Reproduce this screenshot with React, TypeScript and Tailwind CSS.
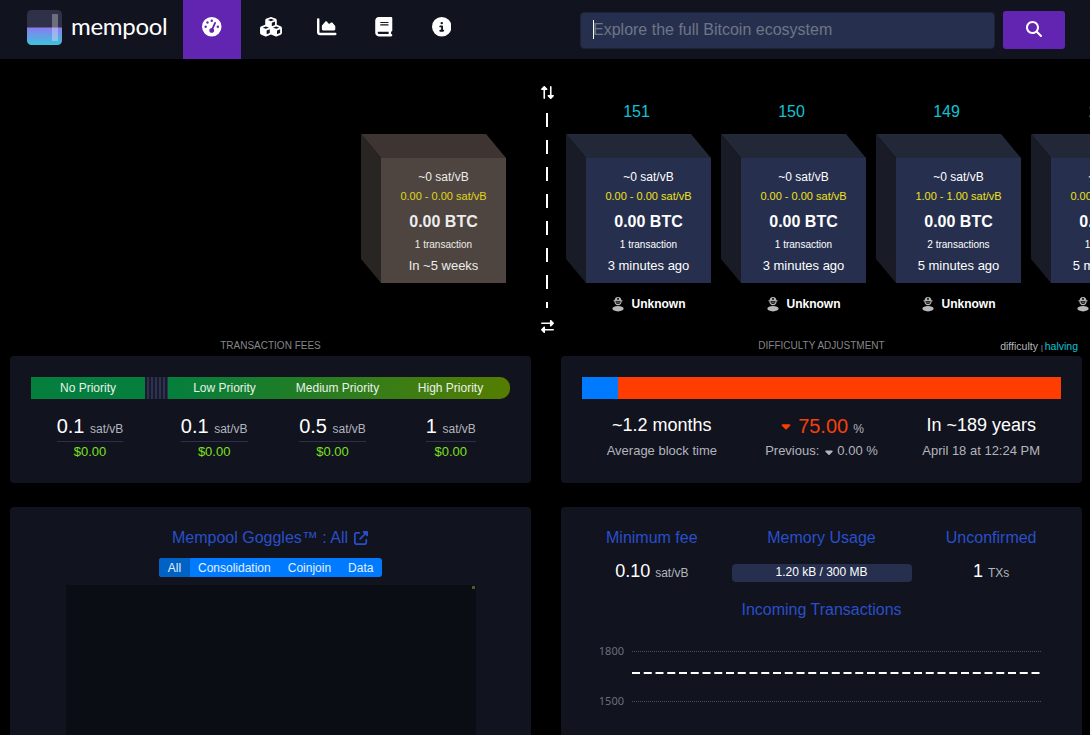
import React from "react";
import {
  FaGaugeHigh,
  FaCubes,
  FaChartArea,
  FaBook,
  FaCircleInfo,
  FaMagnifyingGlass,
  FaRightLeft,
  FaUpRightFromSquare,
  FaCaretDown,
} from "react-icons/fa6";

type Block = {
  height?: string;
  fee: string;
  range: string;
  total: string;
  txs: string;
  time: string;
};

const blocks: Block[] = [
  { height: "151", fee: "~0 sat/vB", range: "0.00 - 0.00 sat/vB", total: "0.00 BTC", txs: "1 transaction", time: "3 minutes ago" },
  { height: "150", fee: "~0 sat/vB", range: "0.00 - 0.00 sat/vB", total: "0.00 BTC", txs: "1 transaction", time: "3 minutes ago" },
  { height: "149", fee: "~0 sat/vB", range: "1.00 - 1.00 sat/vB", total: "0.00 BTC", txs: "2 transactions", time: "5 minutes ago" },
  { height: "148", fee: "~0 sat/vB", range: "0.00 - 0.00 sat/vB", total: "0.00 BTC", txs: "1 transaction", time: "5 minutes ago" },
];

const pending: Block = {
  fee: "~0 sat/vB",
  range: "0.00 - 0.00 sat/vB",
  total: "0.00 BTC",
  txs: "1 transaction",
  time: "In ~5 weeks",
};

const fees = [
  { value: "0.1", cell: "w-[118px] mr-[6px]" },
  { value: "0.1", cell: "flex-1" },
  { value: "0.5", cell: "flex-1" },
  { value: "1", cell: "flex-1" },
];

function Logo() {
  return (
    <svg width="35" height="35" viewBox="0 0 35 35">
      <defs>
        <linearGradient id="logoFill" x1="0" y1="0" x2="0" y2="1">
          <stop offset="0" stopColor="#8c7cf0" />
          <stop offset="1" stopColor="#3cc3dc" />
        </linearGradient>
        <clipPath id="logoClip">
          <rect width="35" height="35" rx="4.5" />
        </clipPath>
      </defs>
      <g clipPath="url(#logoClip)">
        <rect width="35" height="18" fill="#2e3148" />
        <rect y="17.5" width="35" height="17.5" fill="url(#logoFill)" />
        <rect x="25" y="4" width="6" height="27" rx="0.8" fill="#fff" fillOpacity="0.3" />
      </g>
    </svg>
  );
}

function MinerIcon() {
  return (
    <svg width="12" height="16" viewBox="0 0 12 16">
      <path d="M2.6 4.8 A3.4 3.9 0 0 1 9.4 4.8 Z" fill="#b9b9b9" />
      <rect x="1.4" y="4.2" width="9.2" height="1.1" rx="0.5" fill="#b9b9b9" />
      <circle cx="6" cy="2.9" r="1.1" fill="#222" />
      <path d="M2.9 5 C2.9 9.8 9.1 9.8 9.1 5" fill="none" stroke="#b9b9b9" strokeWidth="1.1" />
      <path d="M4.4 6.7 H7.6" stroke="#8a8a8a" strokeWidth="0.8" />
      <ellipse cx="6" cy="12.7" rx="5.6" ry="2.7" fill="#b9b9b9" />
    </svg>
  );
}

function Cube({ block, isPending = false }: { block: Block; isPending?: boolean }) {
  return (
    <div className="grid h-[149px] w-[145px] shrink-0 grid-cols-[20px_125px] grid-rows-[24px_125px]">
      <div
        className={`col-span-2 row-start-1 col-start-1 [clip-path:polygon(0_0,125px_0,145px_24px,20px_24px)] ${
          isPending ? "bg-[#3e3532]" : "bg-[#232838]"
        }`}
      />
      <div
        className={`col-start-1 row-span-2 row-start-1 [clip-path:polygon(0_0,20px_24px,20px_149px,0_125px)] ${
          isPending ? "bg-[#292522]" : "bg-[#191c27]"
        }`}
      />
      <div
        className={`col-start-2 row-start-2 flex flex-col items-center whitespace-nowrap text-white ${
          isPending ? "bg-[#4e4540]" : "bg-[#272f4e]"
        }`}
      >
        <div className={`flex flex-col items-center pt-[11px] ${isPending ? "opacity-90" : ""}`}>
          <div className="text-[12px] leading-[16px]">{block.fee}</div>
          <div className="mt-[3px] text-[11px] leading-4 text-[#eee319]">{block.range}</div>
          <div className="mt-2 text-[16px] font-bold leading-[20px]">{block.total}</div>
          <div className="mt-[5px] text-[10px] leading-4">{block.txs}</div>
          <div className="mt-[5px] text-[13px] leading-4">{block.time}</div>
        </div>
      </div>
    </div>
  );
}

function Header() {
  return (
    <header className="flex h-[59px] shrink-0 items-start bg-[#11131f]">
      <div className="flex w-[183px] items-start pl-[27px] pt-[10px]">
        <Logo />
        <span className="ml-[9px] text-[24px] leading-[32px] tracking-[-0.3px] text-white [font-family:Lato,sans-serif]">
          mempool
        </span>
      </div>
      <nav className="flex h-full text-[19.5px] text-white">
        <a className="flex w-[58px] justify-center bg-[#6225b2] pt-[17px]"><FaGaugeHigh /></a>
        <a className="flex w-[60px] justify-center pr-px pt-[17px]"><FaCubes className="w-[22px]" /></a>
        <a className="flex w-[52px] justify-center pt-[17px]"><FaChartArea /></a>
        <a className="flex w-[61px] justify-center pt-[17px]"><FaBook /></a>
        <a className="flex w-[55px] justify-center pt-[17px]"><FaCircleInfo /></a>
      </nav>
      <div className="ml-auto mr-[25px] flex pt-[11px]">
        <div className="mt-px flex h-[37px] w-[415px] items-center rounded-[4px] border border-[#1d2238] bg-[#272f4e] pb-[2px] pl-[12px] text-[16px] text-[#6d7685]">
          <span className="h-[19px] w-px bg-white" />
          <span className="-ml-px">Explore the full Bitcoin ecosystem</span>
        </div>
        <button className="ml-2 flex h-[38px] w-[62px] items-center justify-center rounded-[3px] bg-[#6225b2] pb-[2px] text-[16px] text-white">
          <FaMagnifyingGlass />
        </button>
      </div>
    </header>
  );
}

function Blockchain() {
  return (
    <section className="flex h-[276px] shrink-0 overflow-hidden">
      <div className="flex w-[506px] shrink-0 justify-end pt-[75px]">
        <Cube block={pending} isPending />
      </div>
      <div className="ml-[31px] flex w-5 shrink-0 flex-col items-center pt-[27px] text-white">
        <FaRightLeft className="h-[13px] w-[13px] rotate-90" />
        <div className="mt-[14px] h-[195px] w-[2px] bg-[repeating-linear-gradient(to_bottom,#fff_0px,#fff_14px,transparent_14px,transparent_27px)]" />
        <FaRightLeft className="mt-[12px] h-[13px] w-[13px]" />
      </div>
      <div className="ml-[9px] flex min-w-0 flex-1 gap-[10px]">
        {blocks.map((b) => (
          <div key={b.height} className="w-[145px] shrink-0 pt-[43px]">
            <div className="w-[141px] text-center text-[16px] leading-5 text-[#10c2d6]">{b.height}</div>
            <div className="pt-[12px]">
              <Cube block={b} />
            </div>
            <div className="flex items-center pl-[46px] pt-[13px]">
              <MinerIcon />
              <span className="ml-[7.5px] text-[12px] font-bold leading-4 text-white">Unknown</span>
            </div>
          </div>
        ))}
      </div>
    </section>
  );
}

function FeesCard() {
  return (
    <div className="h-[127px] rounded-[4px] bg-[#11131f] px-[21px] pt-[21px]">
      <div className="flex h-[22px] text-center text-[12px] leading-[22px] text-[#e8f2ea]">
        <div className="w-[114px] bg-[#047f3d]">No Priority</div>
        <div className="w-[23px] bg-[repeating-linear-gradient(to_right,#181b2b_0px,#181b2b_2px,#2e3150_2px,#2e3150_4px)]" />
        <div className="flex w-[342px] rounded-r-[10px] bg-[linear-gradient(to_right,#047f3d,#1d7d28_33%,#3a7d16_66%,#557d00)]">
          <span className="w-[113px]">Low Priority</span>
          <span className="w-[113px]">Medium Priority</span>
          <span className="w-[113px]">High Priority</span>
        </div>
      </div>
      <div className="flex pt-[15px]">
        {fees.map((f, i) => (
          <div key={i} className={`flex flex-col items-center ${f.cell}`}>
            <div className="flex h-[28px] items-baseline border-b border-[#2d3048] leading-[24px]">
              <span className="text-[20px] text-white">{f.value}</span>
              <span className="ml-[5.5px] text-[12px] text-[#b3b5bd]">sat/vB</span>
            </div>
            <div className="mt-px text-[13px] leading-[18px] text-[#7ce11d]">$0.00</div>
          </div>
        ))}
      </div>
    </div>
  );
}

function DifficultyCard() {
  return (
    <div className="h-[127px] rounded-[4px] bg-[#11131f] px-[21px] pt-[21px]">
      <div className="flex h-[22px] bg-[#ff3d00]">
        <div className="w-[36px] bg-[#007bff]" />
      </div>
      <div className="grid grid-cols-3 pt-[14px] text-center text-[13px] text-[#b3b5bd]">
        <div>
          <div className="h-[28px] text-[18px] leading-[24px] text-white">~1.2 months</div>
          <div className="leading-[20px]">Average block time</div>
        </div>
        <div>
          <div className="flex h-[28px] items-baseline justify-center leading-[26px]">
            <FaCaretDown className="-mt-[2px] ml-[2px] h-[14px] w-[10px] self-center text-[#ff3d00]" />
            <span className="ml-[7px] text-[20px] text-[#f5400c]">75.00</span>
            <span className="ml-[5px] text-[12px]">%</span>
          </div>
          <div className="flex items-center justify-center leading-[20px]">
            Previous: <FaCaretDown className="ml-[6px] mr-[4px] mt-px h-[12px] w-[8px]" /> 0.00 %
          </div>
        </div>
        <div>
          <div className="h-[28px] text-[18px] leading-[24px] text-white">In ~189 years</div>
          <div className="leading-[20px]">April 18 at 12:24 PM</div>
        </div>
      </div>
    </div>
  );
}

function GogglesCard() {
  return (
    <div className="flex h-[228px] flex-col items-center overflow-hidden rounded-t-[4px] bg-[#11131f] pt-[21px]">
      <div className="flex items-center pr-px text-[16px] leading-5 text-[#2a4fc9]">
        Mempool Goggles™ : All
        <FaUpRightFromSquare className="ml-[6px] h-[14px] w-[14px]" />
      </div>
      <div className="mt-[10px] flex h-[19px] w-[223px] overflow-hidden rounded-[3px] bg-[#007bff] text-[12px] leading-[20px] text-[#e2f0ff]">
        <span className="w-[31px] bg-[#0062c4] text-center">All</span>
        <span className="pl-2">Consolidation</span>
        <span className="pl-[17px]">Coinjoin</span>
        <span className="pl-[17px]">Data</span>
      </div>
      <div className="mt-2 flex h-[150px] w-[410px] justify-end bg-[#0a0d14] pr-px pt-px">
        <div className="h-[3px] w-[3px] bg-[#4a5f28]" />
      </div>
    </div>
  );
}

function Chart() {
  return (
    <svg className="mt-[20px] block" width="521" height="96" viewBox="0 0 521 96">
      <g fill="#6a6e7c" fontFamily="'Noto Sans', sans-serif" fontSize="11" textAnchor="end">
        <text x="63" y="15">1800</text>
        <text x="63" y="65">1500</text>
      </g>
      <path d="M71 11.5 H480 M71 61.5 H480" stroke="#4a4d5a" strokeWidth="1" strokeDasharray="1 1" />
      <path d="M71 33 H480" stroke="#fff" strokeWidth="2" strokeDasharray="8 3.75" />
    </svg>
  );
}

function MempoolCard() {
  return (
    <div className="h-[228px] overflow-hidden rounded-t-[4px] bg-[#11131f] pt-[21px]">
      <div className="grid grid-cols-3 px-[6px] text-center text-[16px] leading-5 text-[#2a4fc9]">
        <div>
          Minimum fee
          <div className="pt-[11px] text-[18px] leading-6 text-white">
            0.10<span className="ml-[5px] text-[12px] text-[#b3b5bd]">sat/vB</span>
          </div>
        </div>
        <div className="flex flex-col items-center">
          Memory Usage
          <div className="mt-[16px] h-[18px] w-[180px] rounded-[4px] bg-[#272f4e] text-[12px] leading-[17px] text-white">
            1.20 kB / 300 MB
          </div>
        </div>
        <div>
          Unconfirmed
          <div className="pt-[11px] text-[18px] leading-6 text-white">
            1<span className="ml-[5px] text-[12px] text-[#b3b5bd]">TXs</span>
          </div>
        </div>
      </div>
      <div className="mt-[15px] text-center text-[16px] leading-5 text-[#2a4fc9]">Incoming Transactions</div>
      <Chart />
    </div>
  );
}

export default function App() {
  return (
    <div className="flex h-[735px] w-[1090px] flex-col overflow-hidden bg-black font-['Liberation_Sans',Arial,sans-serif]">
      <Header />
      <Blockchain />
      <main className="grid grid-cols-[521px_521px] gap-x-[30px] pl-[10px]">
        <div className="h-[21px] pt-px text-center text-[10px] leading-[19px] text-[#85868a]">TRANSACTION FEES</div>
        <div className="grid h-[21px] grid-cols-[1fr_auto_1fr] pt-px text-[10px] leading-[19px] text-[#85868a]">
          <span />
          <span>DIFFICULTY ADJUSTMENT</span>
          <span className="pr-1 pt-px text-right text-[10.5px] text-[#b3b5bd]">
            difficulty<span className="ml-[3px] mr-[2px] text-[7px]">|</span>
            <span className="text-[#10c2d6]">halving</span>
          </span>
        </div>
        <FeesCard />
        <DifficultyCard />
        <div className="pt-6"><GogglesCard /></div>
        <div className="pt-6"><MempoolCard /></div>
      </main>
    </div>
  );
}
